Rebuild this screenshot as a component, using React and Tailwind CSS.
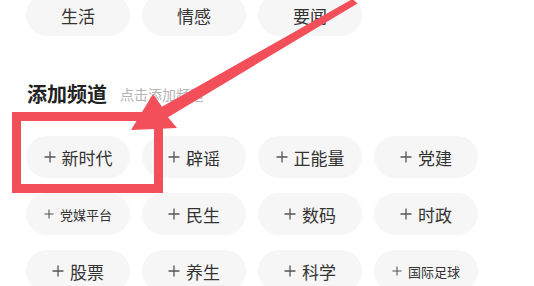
import React from "react";

const TOP = ["生活", "情感", "要闻"];

const ROWS = [
  [{ t: "新时代" }, { t: "辟谣" }, { t: "正能量" }, { t: "党建" }],
  [{ t: "党媒平台", sm: true }, { t: "民生" }, { t: "数码" }, { t: "时政" }],
  [{ t: "股票" }, { t: "养生" }, { t: "科学" }, { t: "国际足球", sm: true }],
];

function Plus({ sm }) {
  return (
    <svg
      viewBox="0 0 12 12"
      className={sm ? "w-[10px] h-[10px]" : "w-[12px] h-[12px]"}
      fill="none"
      stroke="#555"
      strokeWidth="1.3"
    >
      <path d="M6 0.5v11M0.5 6h11" />
    </svg>
  );
}

function Pill({ children }) {
  return (
    <div className="w-[104px] h-[42px] rounded-full bg-[#f6f6f6] flex items-center justify-center gap-[6px] text-[#333]">
      {children}
    </div>
  );
}

export default function App() {
  return (
    <div
      className="relative w-[534px] h-[286px] overflow-hidden bg-white pl-[26px]"
      style={{ fontFamily: '"Noto Sans CJK SC", "Noto Sans", sans-serif' }}
    >
      {/* my channels (tail) */}
      <div className="flex gap-3 -mt-[6px]">
        {TOP.map((t) => (
          <Pill key={t}>
            <span className="text-[17px] leading-none">{t}</span>
          </Pill>
        ))}
      </div>

      {/* add channels header */}
      <div className="flex items-center h-[28px] mt-[44px] mb-[28px] pl-[1px]">
        <span className="text-[20px] font-bold text-[#222] leading-none">添加频道</span>
        <span className="ml-[13px] text-[14px] text-[#b3b3b3] leading-none">点击添加频道</span>
      </div>

      <div className="flex flex-col gap-[15px]">
        {ROWS.map((row, i) => (
          <div key={i} className="flex gap-3">
            {row.map((c) => (
              <Pill key={c.t}>
                <Plus sm={c.sm} />
                <span className={c.sm ? "text-[13px] leading-none" : "text-[17px] leading-none"}>
                  {c.t}
                </span>
              </Pill>
            ))}
          </div>
        ))}
      </div>

      {/* annotation */}
      <div className="absolute left-[12px] top-[112px] w-[151px] h-[81px] border-[9px] border-[#f34f5b]" />
      <svg className="absolute left-0 top-0 w-[534px] h-[286px] pointer-events-none" viewBox="0 0 534 286">
        <polygon
          fill="#f34f5b"
          points="357.5,3.5 352.5,-1 162,106.8 153,94 131,130 177,128 168,117.2"
        />
      </svg>
    </div>
  );
}
